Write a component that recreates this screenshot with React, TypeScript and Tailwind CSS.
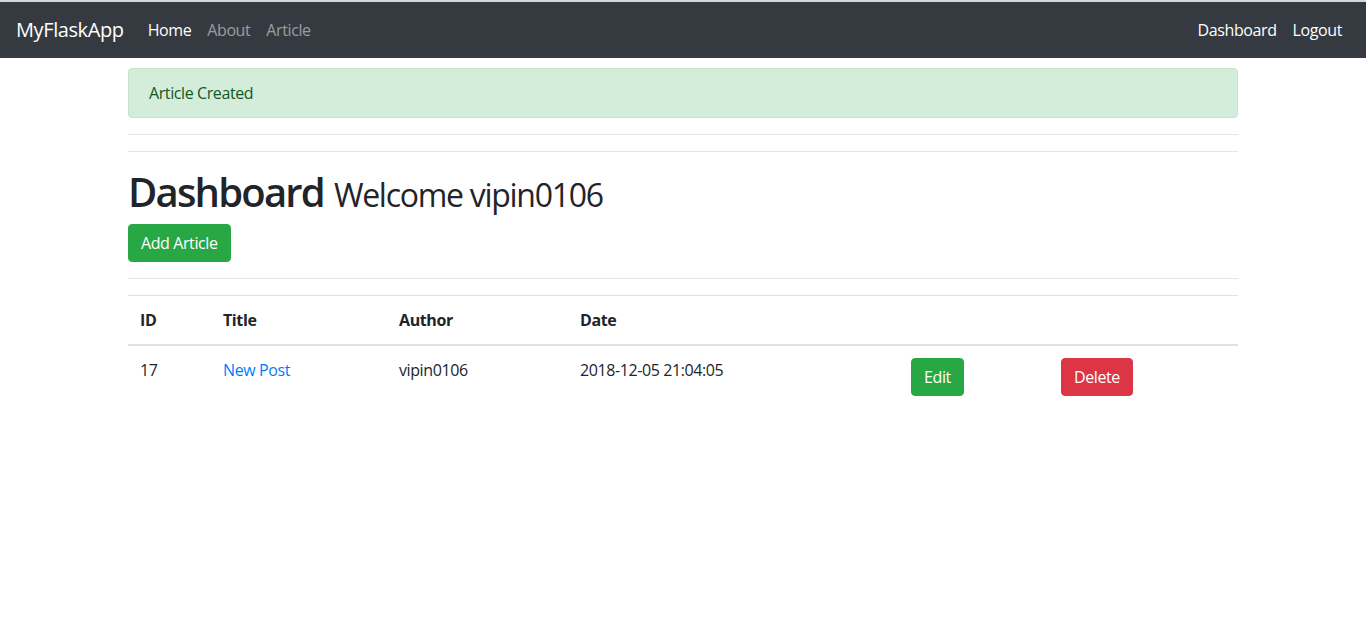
import React from "react";

export default function App() {
  return (
    <div className="min-h-[636px] bg-white text-[#212529] text-base leading-6 tracking-[-0.025em] font-['Open_Sans',sans-serif]">
      <div className="h-[2px] bg-[#d6d6d6]" />
      <nav className="flex items-center justify-between bg-[#343a40] px-4 py-2">
        <div className="flex items-center">
          <a className="mr-4 py-[5px] text-xl leading-[30px] text-white">MyFlaskApp</a>
          <ul className="flex">
            <li><a className="block px-2 py-2 text-white">Home</a></li>
            <li><a className="block px-2 py-2 text-white/50">About</a></li>
            <li><a className="block px-2 py-2 text-white/50">Article</a></li>
          </ul>
        </div>
        <ul className="flex">
          <li><a className="block px-2 py-2 text-white">Dashboard</a></li>
          <li><a className="block px-2 py-2 text-white">Logout</a></li>
        </ul>
      </nav>
      <div className="mx-auto w-[1110px]">
        <div className="mt-[10px] mb-4 rounded border border-[#c3e6cb] bg-[#d4edda] px-5 py-3 text-[#155724]">
          Article Created
        </div>
        <hr className="my-4 border-t border-black/10" />
        <hr className="my-4 border-t border-black/10" />
        <h1 className="mb-2 h-12 text-[40px] font-semibold leading-[48px]">
          <span className="tracking-[-0.045em]">Dashboard</span>{" "}
          <small className="text-[32px] font-normal leading-none tracking-[-0.04em]">Welcome vipin0106</small>
        </h1>
        <a className="inline-block rounded border border-[#28a745] bg-[#28a745] px-3 py-[6px] text-white">Add Article</a>
        <hr className="mt-4 mb-4 border-t border-black/10" />
        <table className="w-full border-collapse text-left">
          <colgroup>
            <col className="w-[83px]" />
            <col className="w-[176px]" />
            <col className="w-[181px]" />
            <col className="w-[331px]" />
            <col className="w-[150px]" />
            <col />
          </colgroup>
          <thead>
            <tr>
              <th className="border-t border-b-2 border-[#dee2e6] p-3 font-bold align-bottom">ID</th>
              <th className="border-t border-b-2 border-[#dee2e6] p-3 font-bold align-bottom">Title</th>
              <th className="border-t border-b-2 border-[#dee2e6] p-3 font-bold align-bottom">Author</th>
              <th className="border-t border-b-2 border-[#dee2e6] p-3 font-bold align-bottom">Date</th>
              <th className="border-t border-b-2 border-[#dee2e6] p-3" />
              <th className="border-t border-b-2 border-[#dee2e6] p-3" />
            </tr>
          </thead>
          <tbody>
            <tr>
              <td className="p-3 align-top">17</td>
              <td className="p-3 align-top"><a className="text-[#007bff]">New Post</a></td>
              <td className="p-3 align-top">vipin0106</td>
              <td className="p-3 align-top">2018-12-05 21:04:05</td>
              <td className="p-3 align-top">
                <a className="inline-block rounded border border-[#28a745] bg-[#28a745] px-3 py-[6px] text-white">Edit</a>
              </td>
              <td className="p-3 align-top">
                <button className="inline-block rounded border border-[#dc3545] bg-[#dc3545] px-3 py-[6px] text-white">Delete</button>
              </td>
            </tr>
          </tbody>
        </table>
      </div>
    </div>
  );
}
